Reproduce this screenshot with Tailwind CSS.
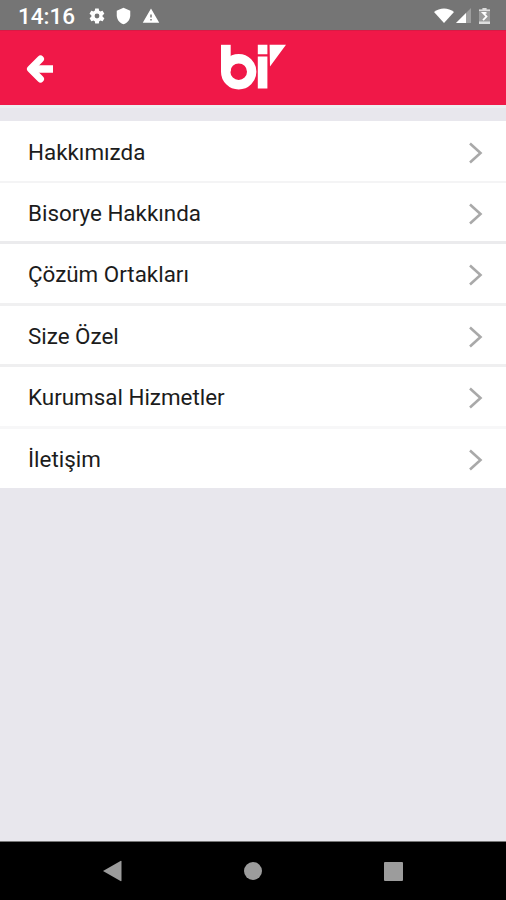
<!DOCTYPE html>
<html lang="tr">
<head>
    <meta charset="UTF-8">
    <meta name="viewport" content="width=device-width, initial-scale=1.0">
    <title>Bi</title>
    <script src="https://cdn.jsdelivr.net/npm/@tailwindcss/browser@4"></script>
</head>
<body class="bg-[#e8e7ed] h-screen flex flex-col overflow-hidden font-[Roboto,sans-serif] text-[#1c1c1c]">
    <!-- Status bar -->
    <div class="h-[30px] shrink-0 bg-[#757575] flex items-center justify-between pl-[18px] pr-[16px] pt-[1px]">
        <div class="flex items-center text-white">
            <span class="w-[57px] mr-[13px] pt-[2px] text-[22.5px] leading-none font-medium">14:16</span>
            <svg class="w-[18px] h-[18px] mr-[8px]" viewBox="0 0 24 24" fill="currentColor"><path d="M19.4 13c0-.3.1-.7.1-1s0-.7-.1-1l2.1-1.600c.2-.2.3-.4.1-.7l-2-3.400c-.1-.2-.4-.3-.6-.2l-2.500 1c-.5-.4-1.100-.7-1.700-1l-.4-2.600c0-.2-.2-.4-.5-.4h-4c-.2 0-.4.2-.5.4l-.4 2.600c-.6.3-1.200.6-1.700 1l-2.500-1c-.2-.1-.5 0-.6.2l-2 3.400c-.1.3-.1.5.1.7L4.500 11c0 .3-.1.7-.1 1s0 .7.1 1l-2.100 1.600c-.2.2-.3.400-.1.7l2 3.400c.1.2.4.3.6.2l2.500-1c.5.4 1.100.7 1.700 1l.4 2.600c0 .2.2.4.5.4h4c.2 0 .4-.2.5-.4l.4-2.600c.6-.3 1.200-.6 1.700-1l2.500 1c.2.1.5 0 .6-.2l2-3.400c.1-.2.1-.5-.1-.7zM12 15.200a3.200 3.200 0 1 1 0-6.400 3.200 3.200 0 0 1 0 6.400z"/></svg>
            <svg class="w-[19px] h-[18px] mr-[9px]" viewBox="0 0 24 24" fill="currentColor"><path d="M12 1 3 5v6c0 5.500 3.800 10.700 9 12 5.200-1.300 9-6.500 9-12V5z"/></svg>
            <svg class="w-[18px] h-[18px]" viewBox="0 0 24 24" fill="currentColor"><path d="M1 21h22L12 2zm12-3h-2v-2h2zm0-4h-2v-4h2z"/></svg>
        </div>
        <div class="flex items-center text-white">
            <svg class="w-[20px] h-[16px] mr-[2px]" viewBox="0 0 20 16" fill="currentColor"><path d="M0 4C5.500-.7 14.500-.7 20 4L10 15z"/></svg>
            <svg class="w-[15px] h-[16px] mr-[8px]" viewBox="0 0 15 16" fill="currentColor"><path d="M0 15 15 0v15z" opacity=".3"/><path d="M0 15 10 5v10z"/></svg>
            <svg class="w-[11px] h-[16px]" viewBox="0 0 11 16"><path d="M3.500 0h4v1.500H11V16H0V1.500h3.500z" fill="#9c9c9c"/><path d="M3.500 0h4v1.500H11V3H0V1.500h3.500zM0 13.500h11V16H0z" fill="#ddd"/><path d="M7.500 4.800h-3.500l3.500 3.700-3.500 3.700" fill="none" stroke="#fff" stroke-width="1.800"/></svg>
        </div>
    </div>

    <!-- Header -->
    <header class="h-[75px] shrink-0 bg-[#f01848] border-t border-[#d81a45] grid grid-cols-3 items-center">
        <button class="ml-[26px] mt-px w-[28px] h-[30px]" aria-label="Geri">
            <svg class="w-[28px] h-[30px]" viewBox="0 0 28 30" fill="none" stroke="#fff" stroke-width="7" stroke-linejoin="round" stroke-linecap="round"><path d="M14.500 5 4.500 15l10 10"/><path d="M6 15h21" stroke-linecap="butt" stroke-width="7.500"/></svg>
        </button>
        <svg class="justify-self-center -mt-[3px] w-[66px] h-[46px]" viewBox="220 43.500 66 46" fill="#fff">
            <path d="M221 44.300h9.700V71H221z"/>
            <circle cx="238.700" cy="71.200" r="13" fill="none" stroke="#fff" stroke-width="9.400"/>
            <path d="M257.800 44.300h9.600v9.400h-9.600zM257.800 56h9.600v32h-9.600zM269.600 44.300h16.400L270 66z"/>
        </svg>
    </header>

    <!-- Menu -->
    <main class="flex-1 border-t-[3px] border-[#ededf0] pt-[13px]">
        <ul class="bg-white h-[367px] grid grid-rows-[62px_61px_62px_61px_62px_59px] text-[22.4px]">
            <li class="flex items-center justify-between pl-7 pr-[23px] pt-[3px] border-b-2 border-[#f4f4f5]">
                <span>Hakkımızda</span>
                <svg class="w-[15px] h-[22px]" viewBox="0 0 15 22" fill="none" stroke="#a9a9a9" stroke-width="2.600"><path d="M2 1.500 12.500 11 2 20.500"/></svg>
            </li>
            <li class="flex items-center justify-between pl-7 pr-[23px] pt-[3px] border-b-[3px] border-[#ebebed]">
                <span>Bisorye Hakkında</span>
                <svg class="w-[15px] h-[22px]" viewBox="0 0 15 22" fill="none" stroke="#a9a9a9" stroke-width="2.600"><path d="M2 1.500 12.500 11 2 20.500"/></svg>
            </li>
            <li class="flex items-center justify-between pl-7 pr-[23px] pt-[3px] border-b-[3px] border-[#f0f0f1]">
                <span>Çözüm Ortakları</span>
                <svg class="w-[15px] h-[22px]" viewBox="0 0 15 22" fill="none" stroke="#a9a9a9" stroke-width="2.600"><path d="M2 1.500 12.500 11 2 20.500"/></svg>
            </li>
            <li class="flex items-center justify-between pl-7 pr-[23px] pt-[3px] border-b-[3px] border-[#efeff0]">
                <span>Size Özel</span>
                <svg class="w-[15px] h-[22px]" viewBox="0 0 15 22" fill="none" stroke="#a9a9a9" stroke-width="2.600"><path d="M2 1.500 12.500 11 2 20.500"/></svg>
            </li>
            <li class="flex items-center justify-between pl-7 pr-[23px] pt-[3px] border-b-[3px] border-[#f7f7f8]">
                <span>Kurumsal Hizmetler</span>
                <svg class="w-[15px] h-[22px]" viewBox="0 0 15 22" fill="none" stroke="#a9a9a9" stroke-width="2.600"><path d="M2 1.500 12.500 11 2 20.500"/></svg>
            </li>
            <li class="flex items-center justify-between pl-7 pr-[23px] pt-[3px]">
                <span>İletişim</span>
                <svg class="w-[15px] h-[22px]" viewBox="0 0 15 22" fill="none" stroke="#a9a9a9" stroke-width="2.600"><path d="M2 1.500 12.500 11 2 20.500"/></svg>
            </li>
        </ul>
    </main>

    <!-- Navigation bar -->
    <nav class="h-[59px] shrink-0 bg-black border-t border-[#777] flex items-center justify-between pl-[102px] pr-[103px]">
        <svg class="w-[20px] h-[22px]" viewBox="0 0 20 22" fill="#9c9c9c"><path d="M1 11 18.500 1q1-.5 1 .6v18.800q0 1.100-1 .6z"/></svg>
        <div class="w-[18px] h-[18px] rounded-full bg-[#9c9c9c]"></div>
        <div class="w-[19px] h-[19px] rounded-[1px] bg-[#9c9c9c]"></div>
    </nav>
</body>
</html>
